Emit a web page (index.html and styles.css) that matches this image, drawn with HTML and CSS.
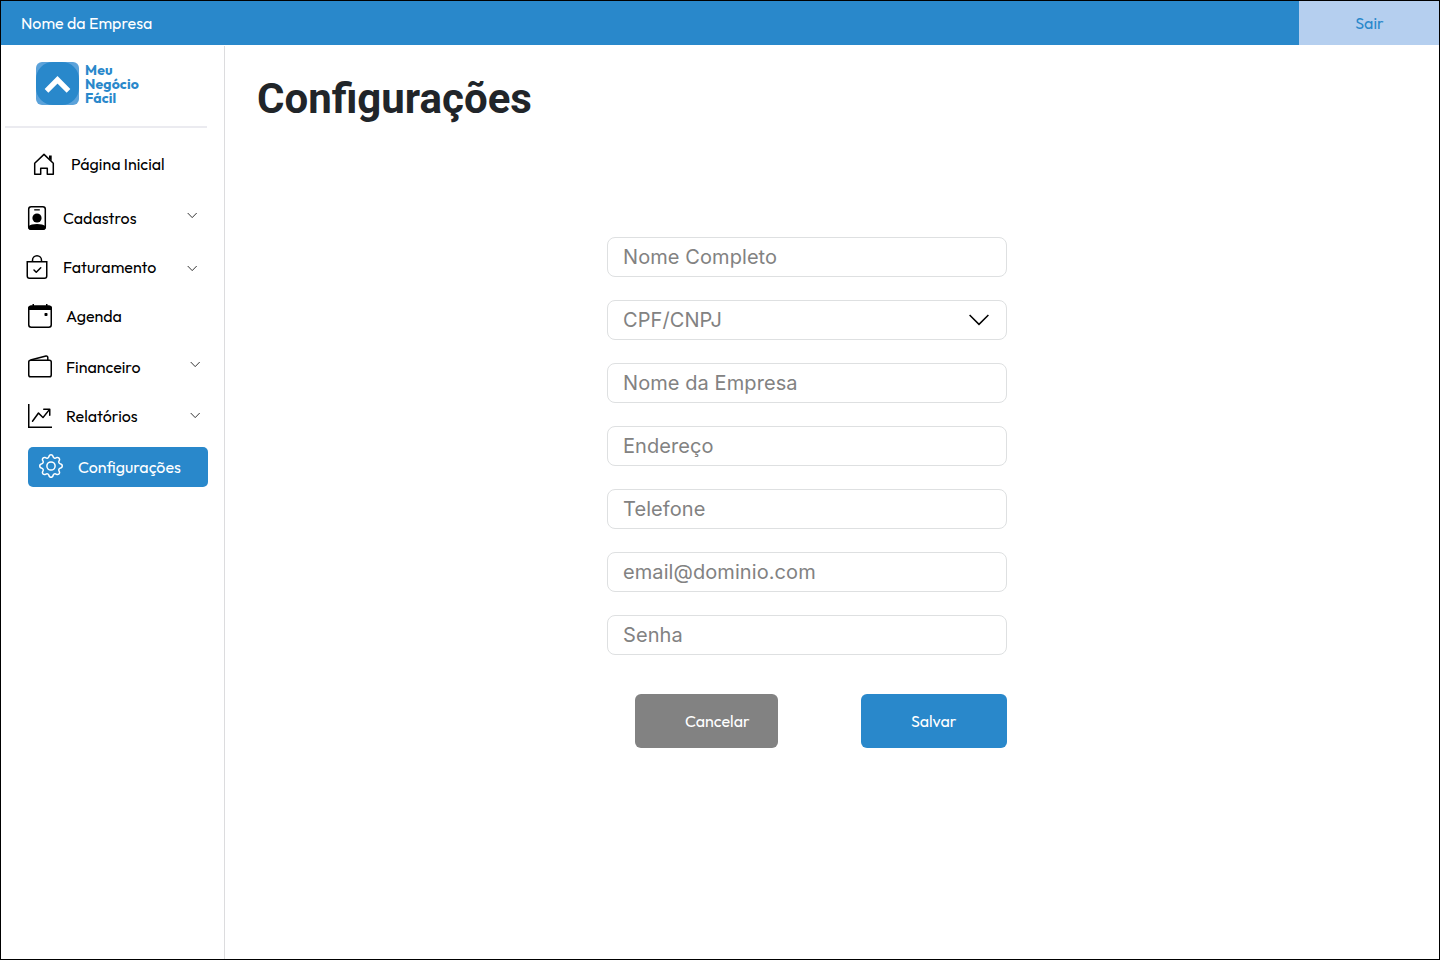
FILE: index.html
```
<!DOCTYPE html>
<html lang="pt-BR">
<head>
<meta charset="utf-8">
<title>Configurações</title>
<link rel="stylesheet" href="styles.css">
</head>
<body>
<div class="app">
  <header class="topbar">
    <span class="company">Nome da Empresa</span>
    <a class="logout"><span>Sair</span></a>
  </header>
  <div class="body">
    <aside class="sidebar">
      <div class="brand">
        <svg class="brand-mark" viewBox="0 0 43 43">
          <rect width="43" height="43" rx="6" fill="#5ba2da"/>
          <rect width="43" height="43" rx="17" fill="#2988cb"/>
          <path d="M10.5 28.8 21.5 17.8 32.5 28.8" fill="none" stroke="#fff" stroke-width="5.2"/>
        </svg>
        <div class="brand-name"><span>Meu</span><span>Negócio</span><span>Fácil</span></div>
      </div>
      <nav class="nav">
        <a class="item home">
          <svg class="icon" viewBox="0 0 24 24"><path d="M2.7 11.2 12 2.4l9.3 8.8v11.1h-6v-6.1H8.7v6.1h-6z" fill="none" stroke="#000" stroke-width="1.5" stroke-linejoin="round"/><path d="M17 3.5h2.7v5.6L17 6.6z"/></svg>
          <span class="label">Página Inicial</span>
        </a>
        <a class="item cadastros">
          <svg class="icon" viewBox="0 0 24 24"><rect x="3.7" y=".75" width="16.6" height="22.5" rx="2.5" fill="none" stroke="#000" stroke-width="1.5"/><path d="M9.2 3.2h5.6v1.3H9.2z"/><circle cx="12" cy="12" r="4.6"/><path d="M3.3 20.2c2-1.5 5-2.3 8.7-2.3s6.7.8 8.7 2.3V21a3 3 0 0 1-3 3H6.3a3 3 0 0 1-3-3z"/></svg>
          <span class="label">Cadastros</span>
          <svg class="chevron" viewBox="0 0 10 6"><path d="M.7 1 5.2 5.6 9.7 1"/></svg>
        </a>
        <a class="item faturamento">
          <svg class="icon" viewBox="0 0 16 16"><path fill-rule="evenodd" d="M10.854 8.146a.5.5 0 0 1 0 .708l-3 3a.5.5 0 0 1-.708 0l-1.5-1.5a.5.5 0 1 1 .708-.708L7.5 10.793l2.646-2.647a.5.5 0 0 1 .708 0z"/><path d="M8 1a2.5 2.5 0 0 1 2.5 2.5V4h-5v-.5A2.5 2.5 0 0 1 8 1zm3.5 3v-.5a3.5 3.5 0 1 0-7 0V4H1v10a2 2 0 0 0 2 2h10a2 2 0 0 0 2-2V4h-3.5zM2 5h12v9a1 1 0 0 1-1 1H3a1 1 0 0 1-1-1V5z"/></svg>
          <span class="label">Faturamento</span>
          <svg class="chevron" viewBox="0 0 10 6"><path d="M.7 1 5.2 5.6 9.7 1"/></svg>
        </a>
        <a class="item agenda">
          <svg class="icon" viewBox="0 0 24 24"><rect x=".75" y="2.25" width="22.5" height="21" rx="2.5" fill="none" stroke="#000" stroke-width="1.5"/><path d="M0 6V4.5a3 3 0 0 1 3-3h1.5V0H6v1.5h12V0h1.5v1.5H21a3 3 0 0 1 3 3V6z"/><rect x="16.5" y="9" width="3" height="3" rx=".7"/></svg>
          <span class="label">Agenda</span>
        </a>
        <a class="item financeiro">
          <svg class="icon" viewBox="0 0 24 24"><g fill="none" stroke="#000" stroke-width="1.5" stroke-linejoin="round"><rect x=".75" y="5.25" width="22.5" height="16.5" rx="1.8"/><path d="M2.5 5.1 18 1.1c1-.25 1.8.3 1.8 1.4v2.5"/></g></svg>
          <span class="label">Financeiro</span>
          <svg class="chevron" viewBox="0 0 10 6"><path d="M.7 1 5.2 5.6 9.7 1"/></svg>
        </a>
        <a class="item relatorios">
          <svg class="icon" viewBox="0 0 16 16"><path fill-rule="evenodd" d="M0 0h1v15h15v1H0V0Zm10 3.5a.5.5 0 0 1 .5-.5h4a.5.5 0 0 1 .5.5v4a.5.5 0 0 1-1 0V4.9l-3.613 4.417a.5.5 0 0 1-.74.037L7.06 6.767l-3.656 5.027a.5.5 0 0 1-.808-.588l4-5.5a.5.5 0 0 1 .758-.06l2.609 2.61L13.445 4H10.5a.5.5 0 0 1-.5-.5Z"/></svg>
          <span class="label">Relatórios</span>
          <svg class="chevron" viewBox="0 0 10 6"><path d="M.7 1 5.2 5.6 9.7 1"/></svg>
        </a>
        <a class="item config">
          <svg class="icon" viewBox="0 0 16 16" fill="#fff"><path d="M8 4.754a3.246 3.246 0 1 0 0 6.492 3.246 3.246 0 0 0 0-6.492zM5.754 8a2.246 2.246 0 1 1 4.492 0 2.246 2.246 0 0 1-4.492 0z"/><path d="M9.796 1.343c-.527-1.79-3.065-1.79-3.592 0l-.094.319a.873.873 0 0 1-1.255.52l-.292-.16c-1.64-.892-3.433.902-2.54 2.541l.159.292a.873.873 0 0 1-.52 1.255l-.319.094c-1.79.527-1.79 3.065 0 3.592l.319.094a.873.873 0 0 1 .52 1.255l-.16.292c-.892 1.64.901 3.434 2.541 2.54l.292-.159a.873.873 0 0 1 1.255.52l.094.319c.527 1.79 3.065 1.79 3.592 0l.094-.319a.873.873 0 0 1 1.255-.52l.292.16c1.64.893 3.434-.902 2.54-2.541l-.159-.292a.873.873 0 0 1 .52-1.255l.319-.094c1.79-.527 1.79-3.065 0-3.592l-.319-.094a.873.873 0 0 1-.52-1.255l.16-.292c.893-1.64-.902-3.433-2.541-2.54l-.292.159a.873.873 0 0 1-1.255-.52l-.094-.319zm-2.633.283c.246-.835 1.428-.835 1.674 0l.094.319a1.873 1.873 0 0 0 2.693 1.115l.291-.16c.764-.415 1.6.42 1.184 1.185l-.159.292a1.873 1.873 0 0 0 1.116 2.692l.318.094c.835.246.835 1.428 0 1.674l-.319.094a1.873 1.873 0 0 0-1.115 2.693l.16.291c.415.764-.42 1.6-1.185 1.184l-.291-.159a1.873 1.873 0 0 0-2.693 1.116l-.094.318c-.246.835-1.428.835-1.674 0l-.094-.319a1.873 1.873 0 0 0-2.692-1.115l-.292.16c-.764.415-1.6-.42-1.184-1.185l.159-.291A1.873 1.873 0 0 0 1.945 8.93l-.319-.094c-.835-.246-.835-1.428 0-1.674l.319-.094A1.873 1.873 0 0 0 3.06 4.377l-.16-.292c-.415-.764.42-1.6 1.185-1.184l.292.159a1.873 1.873 0 0 0 2.692-1.115l.094-.319z"/></svg>
          <span class="label">Configurações</span>
        </a>
      </nav>
    </aside>
    <main class="content">
      <h1 class="title">Configurações</h1>
      <form class="form">
        <input class="field" type="text" placeholder="Nome Completo">
        <div class="field select"><span>CPF/CNPJ</span><svg class="caret" viewBox="0 0 20 12"><path d="M.6 1 10 10.4 19.4 1"/></svg></div>
        <input class="field" type="text" placeholder="Nome da Empresa">
        <input class="field" type="text" placeholder="Endereço">
        <input class="field" type="text" placeholder="Telefone">
        <input class="field" type="text" placeholder="email@dominio.com">
        <input class="field" type="text" placeholder="Senha">
        <div class="actions">
          <button class="btn cancel" type="button">Cancelar</button>
          <button class="btn save" type="button">Salvar</button>
        </div>
      </form>
    </main>
  </div>
</div>
</body>
</html>
```
FILE: styles.css
```
* { box-sizing: border-box; }
body { margin: 0; background: #fff; font-family: Outfit, Lato, sans-serif; font-size: 16px; color: #000; }
.app { width: 1440px; height: 960px; border: 1px solid #000; display: flex; flex-direction: column; }
.topbar { height: 44px; display: flex; justify-content: space-between; background: #2988cb; color: #fff; flex: none; }
.company { padding-left: 20px; line-height: 45px; }
.logout { width: 140px; padding-left: 1px; background: #b5cfef; color: #2988cb; text-align: center; line-height: 45px; }
.body { flex: 1; display: flex; padding-top: 1px; }
.sidebar { width: 224px; border-right: 1px solid #dcdcde; }
.brand { margin: 0 17px 0 4px; height: 82px; padding: 16px 0 0 31px; display: flex; gap: 6px; border-bottom: 2px solid #ebebf0; }
.brand-mark { width: 43px; height: 43px; flex: none; }
.brand-name { display: flex; flex-direction: column; font-size: 14px; line-height: 14.2px; font-weight: 700; letter-spacing: .15px; color: #2988cb; padding-top: .8px; }
.nav { display: flex; flex-direction: column; padding-top: 16px; }
.item { display: flex; align-items: center; height: 40px; }
.icon { width: 24px; height: 24px; flex: none; }
.label { line-height: 20px; white-space: nowrap; padding-bottom: 1px; }
.chevron { width: 10px; height: 6px; margin-left: auto; }
.chevron path { fill: none; stroke: #000; stroke-width: .8; }
.home { padding-left: 31px; margin-bottom: 14px; }
.home .label { margin-left: 15px; }
.cadastros, .faturamento { padding: 0 27px 0 24px; margin-bottom: 9px; }
.cadastros .label, .faturamento .label { margin-left: 14px; }
.cadastros .chevron { margin-bottom: 6px; }
.faturamento .chevron { margin-top: 2px; }
.agenda, .financeiro, .relatorios { padding: 0 24px 0 27px; }
.agenda .label, .financeiro .label, .relatorios .label { margin-left: 14px; }
.agenda, .relatorios { margin-bottom: 11px; }
.financeiro { margin-bottom: 9px; }
.financeiro .chevron { margin-bottom: 6px; }
.relatorios .chevron { margin-bottom: 2px; }
.config { margin: 0 16px 0 27px; padding-left: 11px; border-radius: 5px; background: #2988cb; color: #fff; }
.config .icon { margin-bottom: 2px; }
.config .label { margin-left: 15px; }
.content { flex: 1; padding: 28px 0 0 32px; }
.title { margin: 0; font: 700 42px/50px Roboto, sans-serif; color: #212529; }
.form { width: 400px; margin: 113px 0 0 350px; display: flex; flex-direction: column; gap: 23px; }
.field { width: 400px; height: 40px; border: 1px solid #dee0e1; border-radius: 8px; background: #fff; padding: 0 15px; font: 430 20px/38px Inter, sans-serif; letter-spacing: .08px; color: #828282; outline: 0; }
.field::placeholder { color: #828282; opacity: 1; }
.select { display: flex; align-items: center; justify-content: space-between; padding-right: 17px; }
.caret { width: 20px; height: 12px; }
.caret path { fill: none; stroke: #000; stroke-width: 1.5; }
.actions { display: flex; justify-content: space-between; padding: 16px 0 0 28px; }
.btn { height: 54px; border: 0; border-radius: 6px; color: #fff; font: 400 16px/54px Outfit, Lato, sans-serif; text-align: left; padding: 0 0 0 50px; }
.cancel { width: 143px; background: #828282; }
.save { width: 146px; background: #2988cb; }
```
